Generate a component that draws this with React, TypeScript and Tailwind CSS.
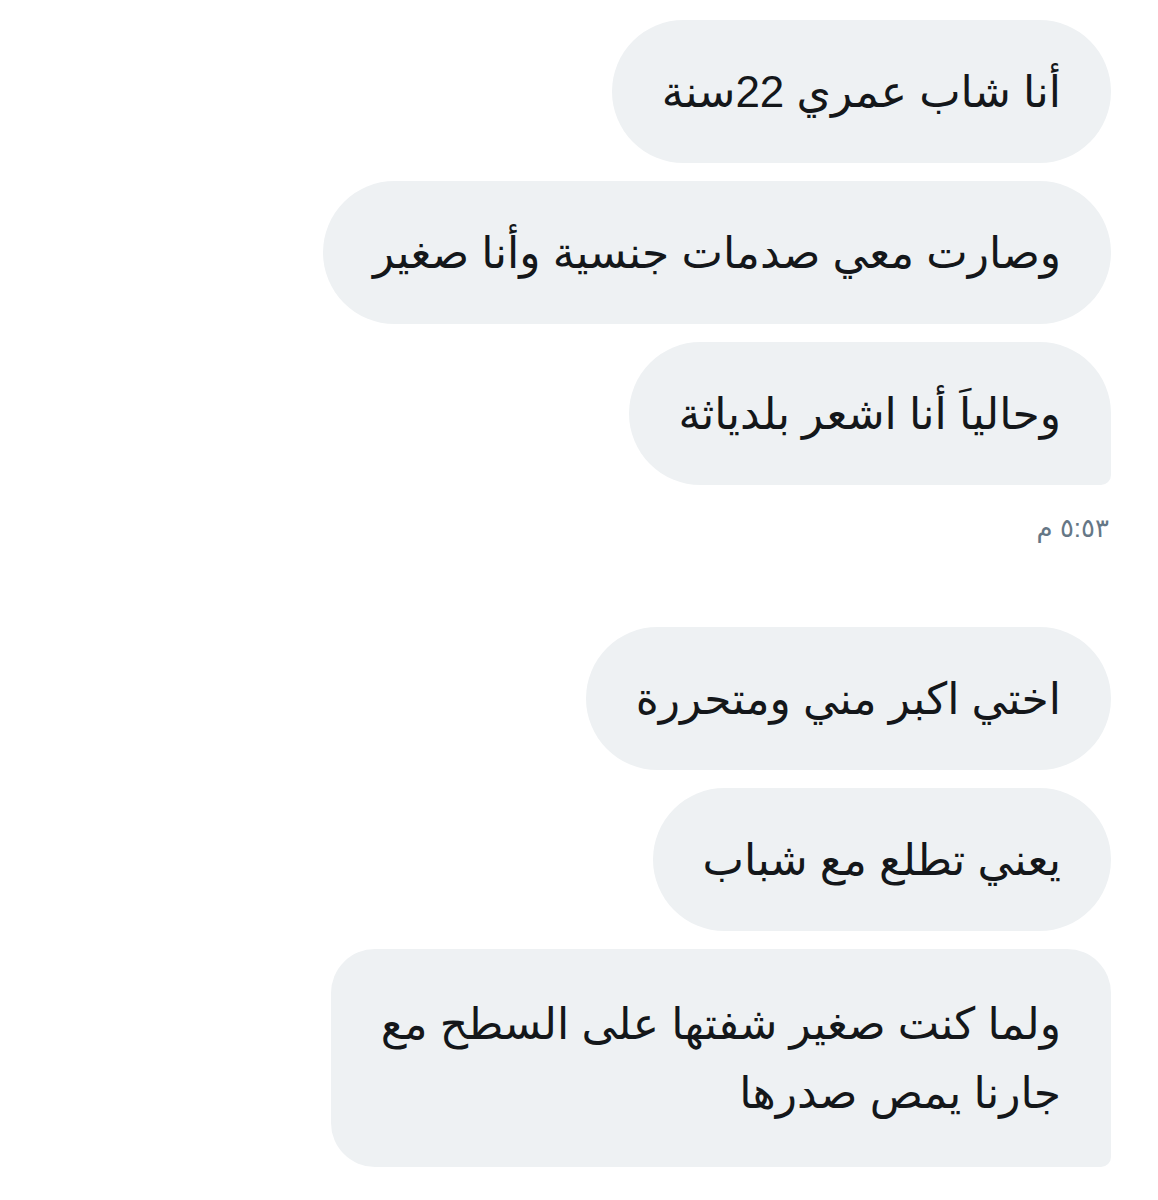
const groups: { lines: string[][]; time?: string }[] = [
  {
    lines: [["أنا شاب عمري 22سنة"], ["وصارت معي صدمات جنسية وأنا صغير"], ["وحالياَ أنا اشعر بلدياثة"]],
    time: "٥:٥٣ م",
  },
  {
    lines: [["اختي اكبر مني ومتحررة"], ["يعني تطلع مع شباب"], ["ولما كنت صغير شفتها على السطح مع", "جارنا يمص صدرها"]],
  },
];

function Bubble({ text, last }: { text: string[]; last: boolean }) {
  const tall = text.length > 1;
  return (
    <div
      dir="rtl"
      className={
        "bg-[#eef1f3] text-[#14171a] text-[44px] px-[50px] py-[40px] " +
        (tall ? "rounded-[44px] leading-[69px] " : "rounded-[72px] leading-[63px] ") +
        (last ? "rounded-br-[10px]" : "")
      }
    >
      {text.map((t, i) => (
        <div key={i}>{t}</div>
      ))}
    </div>
  );
}

export default function App() {
  return (
    <div
      className="w-[1158px] h-[1200px] bg-white overflow-hidden pt-[20px] pr-[47px] flex flex-col items-end"
      style={{ fontFamily: '"Liberation Sans", "DejaVu Sans", sans-serif' }}
    >
      {groups.map((g, gi) => (
        <div key={gi} className={"flex flex-col items-end gap-[18px] " + (gi > 0 ? "mt-[84px]" : "")}>
          {g.lines.map((l, i) => (
            <Bubble key={i} text={l} last={i === g.lines.length - 1} />
          ))}
          {g.time && (
            <div dir="rtl" className="text-[#657786] text-[26px] leading-[30px] mt-[10px] pr-[2px]">
              {g.time}
            </div>
          )}
        </div>
      ))}
    </div>
  );
}
